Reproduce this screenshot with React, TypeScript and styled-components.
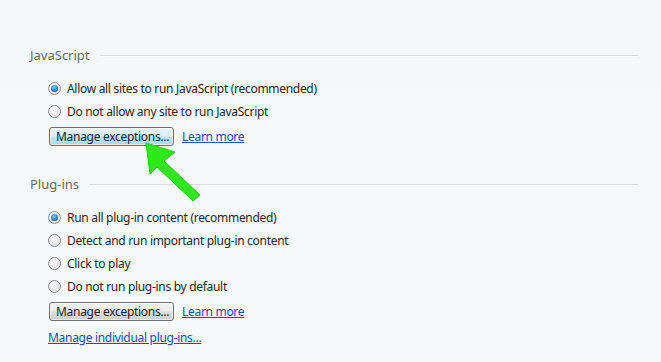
import React from "react";
import styled, { createGlobalStyle } from "styled-components";

const Global = createGlobalStyle`
  html, body { margin: 0; padding: 0; }
  body {
    width: 661px; height: 362px; overflow: hidden;
    background: #f5f9fc;
    font-family: "Noto Sans", "Open Sans", sans-serif;
  }
`;

const Page = styled.div`
  position: relative;
  width: 661px;
  height: 362px;
  box-sizing: border-box;
  padding: 46px 23px 0 30px;
  background: linear-gradient(180deg, #f4f7fa 0%, #f5f9fc 30%, #f6fafd 100%);
  display: flex;
  flex-direction: column;
`;

const Section = styled.section<{ $gap: number }>`
  display: flex;
  flex-direction: column;
  margin-bottom: ${(p) => p.$gap}px;
`;

const Header = styled.div`
  display: flex;
  align-items: center;
  height: 18px;
  gap: 10px;
`;

const Title = styled.h3`
  margin: 0;
  font-weight: 400;
  font-size: 13px;
  color: #6a6a6a;
  line-height: 18px;
  white-space: nowrap;
`;

const Rule = styled.div`
  flex: 1;
  height: 1px;
  background: #d7dce1;
  box-shadow: 0 1px 0 #ffffff;
`;

const Body = styled.div`
  display: flex;
  flex-direction: column;
  padding-left: 18px;
  margin-top: 12.5px;
  letter-spacing: -0.3px;
`;

const Row = styled.label`
  display: flex;
  align-items: center;
  height: 23px;
  gap: 6px;
  font-size: 12px;
  color: #252525;
  white-space: nowrap;
`;

const Radio = styled.span<{ $on?: boolean }>`
  position: relative;
  width: 13px;
  height: 13px;
  box-sizing: border-box;
  border-radius: 50%;
  border: 1px solid #8d8d8d;
  background: radial-gradient(circle at 40% 35%, #ffffff 0%, #e4e4e4 60%, #cfcfcf 100%);
  flex: none;
  &::after {
    content: "";
    display: ${(p) => (p.$on ? "block" : "none")};
    position: absolute;
    left: 2px;
    top: 2px;
    width: 7px;
    height: 7px;
    border-radius: 50%;
    background: radial-gradient(circle at 45% 35%, #7fd0f6 0%, #2b7fc4 55%, #143d78 100%);
  }
`;

const ButtonRow = styled.div`
  display: flex;
  align-items: center;
  gap: 8px;
  margin-top: 4.5px;
`;

const Button = styled.button<{ $focus?: boolean }>`
  height: 19px;
  width: 125px;
  box-sizing: border-box;
  padding: 0 6px;
  margin: 0 0 0 1px;
  font-family: inherit;
  font-size: 12px;
  letter-spacing: -0.3px;
  line-height: 15px;
  color: #1e1e1e;
  border-radius: 3px;
  border: 1px solid ${(p) => (p.$focus ? "#3d7bad" : "#707070")};
  background: ${(p) =>
    p.$focus
      ? "linear-gradient(180deg, #e5f4fc 0%, #d9eefb 48%, #bee6fd 52%, #a7d9f5 100%)"
      : "linear-gradient(180deg, #f2f2f2 0%, #ebebeb 48%, #dddddd 52%, #cfcfcf 100%)"};
  box-shadow: inset 0 0 0 1px rgba(255, 255, 255, 0.6);
  white-space: nowrap;
`;

const Link = styled.a`
  font-size: 12px;
  color: #2744cc;
  text-decoration: underline;
  white-space: nowrap;
`;

const FootLink = styled(Link)`
  margin-top: 8px;
  line-height: 17px;
`;

const Arrow = styled.svg`
  position: absolute;
  left: 0;
  top: 0;
  pointer-events: none;
`;

export default function App() {
  return (
    <>
      <Global />
      <Page>
        <Section $gap={29}>
          <Header>
            <Title>JavaScript</Title>
            <Rule />
          </Header>
          <Body>
            <Row>
              <Radio $on />
              Allow all sites to run JavaScript (recommended)
            </Row>
            <Row>
              <Radio />
              Do not allow any site to run JavaScript
            </Row>
            <ButtonRow>
              <Button $focus>Manage exceptions...</Button>
              <Link>Learn more</Link>
            </ButtonRow>
          </Body>
        </Section>
        <Section $gap={0}>
          <Header>
            <Title>Plug-ins</Title>
            <Rule />
          </Header>
          <Body>
            <Row>
              <Radio $on />
              Run all plug-in content (recommended)
            </Row>
            <Row>
              <Radio />
              Detect and run important plug-in content
            </Row>
            <Row>
              <Radio />
              Click to play
            </Row>
            <Row>
              <Radio />
              Do not run plug-ins by default
            </Row>
            <ButtonRow>
              <Button>Manage exceptions...</Button>
              <Link>Learn more</Link>
            </ButtonRow>
            <FootLink>Manage individual plug-ins...</FootLink>
          </Body>
        </Section>
        <Arrow width="661" height="362" viewBox="0 0 661 362">
          <polygon
            points="146,143 175,152 164,161 200,195 193,201 157,167 150,174"
            fill="#2ee81c"
            stroke="#27c818"
            strokeWidth="1"
            strokeLinejoin="round"
          />
        </Arrow>
      </Page>
    </>
  );
}
